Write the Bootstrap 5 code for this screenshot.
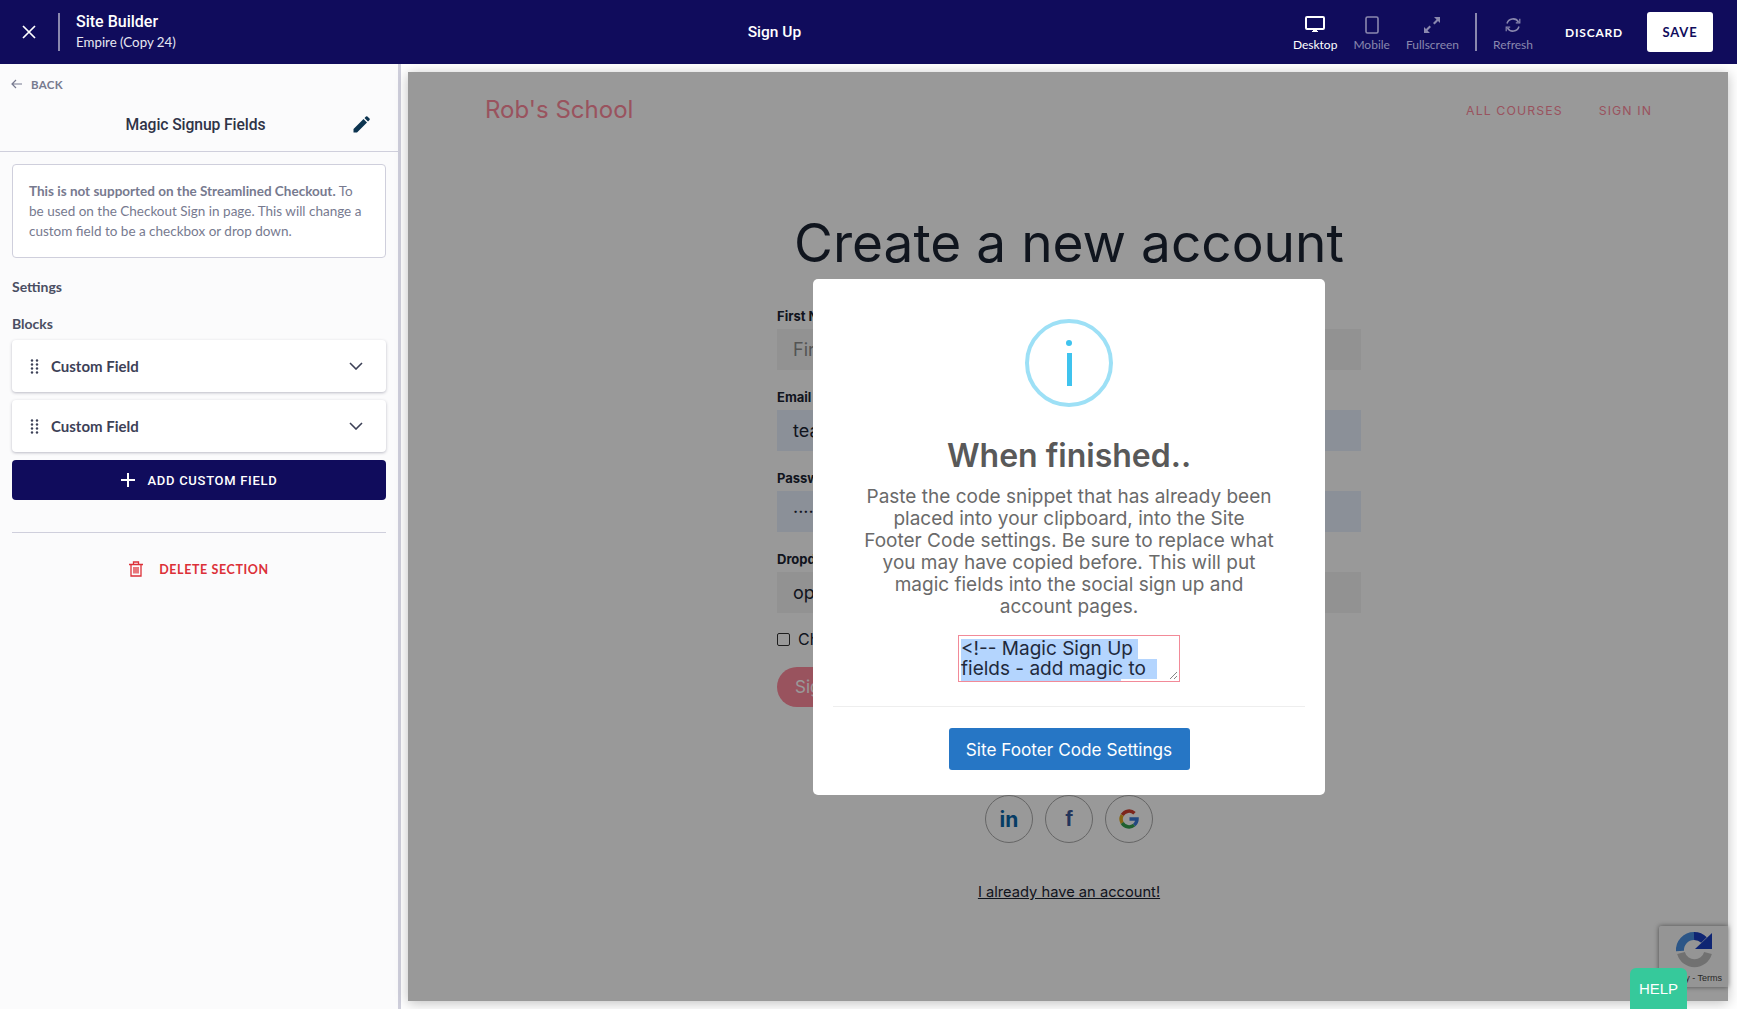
<!DOCTYPE html>
<html lang="en">
<head>
<meta charset="utf-8">
<title>Site Builder</title>
<link href="https://cdn.jsdelivr.net/npm/bootstrap@5.3.0/dist/css/bootstrap.min.css" rel="stylesheet">
<style>
html,body{height:100%;overflow:hidden}
body{font-family:"Lato","Noto Sans",sans-serif;background:#fff}
.shell{height:1009px}
.topbar{height:64px;background:#100c5c;color:#fff;flex:none}
.close-x{width:58px}
.vrule{width:2px;height:38px;background:#8a88ae}
.crumb-title{font:500 16px/20px Roboto,sans-serif}
.crumb-sub{font:400 13.3px/20px "Lato",sans-serif;color:#e7e7f2}
.page-name{font:500 15.5px Roboto,sans-serif;flex:1;text-align:center;padding-left:80px}
.tool{font:400 12px/14px "Lato",sans-serif;color:#8a88ae;text-align:center;padding-top:3px}
.tool.on{color:#fff}
.tool svg{display:block;margin:0 auto 4px}
.act-discard{font:700 12px "Lato",sans-serif;letter-spacing:.8px;color:#fff}
.act-save{font:700 13px "Lato",sans-serif;letter-spacing:.8px;color:#100c5c;background:#fff;border-radius:3px;width:66px;height:40px}
.sidepane{width:401px;flex:none;background:#fbfbfc;border-right:3px solid #cfcfdc;height:945px}
.back-row{height:40px;padding:0 11px;font:700 11.5px "Lato",sans-serif;letter-spacing:.3px;color:#777a8f}
.title-row{height:48px;border-bottom:1px solid #cfcfdc;padding:0 28px 7px 0}
.title-row h1{font:500 15.7px Roboto,sans-serif;letter-spacing:-.1px;color:#2f3347;margin:0;flex:1;text-align:center;padding-left:46px}
.info-box{margin:12px 12px 0;padding:16px 21px 16px 16px;height:94px;border:1px solid #cfcfdc;border-radius:4px;background:#fff;font:400 13.5px/20px "Lato",sans-serif;color:#777a8f}
.info-box b{font-weight:700}
.side-label{font:700 14px/18px "Lato",sans-serif;color:#4a4e62;margin:0 12px}
.label-first{margin-top:20px}
.label-next{margin-top:19px;margin-bottom:7px}
.field-card{height:52px;margin:0 12px 8px;background:#fff;border-radius:4px;box-shadow:0 1px 3px rgba(40,40,70,.3);padding:0 23px 0 18px;font:700 15px "Lato",sans-serif;color:#3d4157}
.add-btn{display:flex;gap:13px;height:40px;margin:0 12px;width:374px;background:#100c5c;color:#fff;border:0;border-radius:4px;font:500 13px Roboto,sans-serif;letter-spacing:.7px}
.side-rule{margin:32px 12px 0;border-top:1px solid #cfcfdc}
.del-row{margin-top:28px;font:700 12.5px "Lato",sans-serif;letter-spacing:.6px;color:#dc3038}
.stage{flex:1;padding:8px 9px 8px 7px;background:#fff;min-width:0}
.canvas{height:929px;background:#fff;box-shadow:0 2px 12px rgba(0,0,0,.25);font-family:Inter,sans-serif;color:#1b2433}
.site-nav{padding:17px 76px 0 77px;height:58px}
.site-links{padding-bottom:2px}
.brand-txt{font:400 24px Inter,sans-serif;color:#ff8a9d}
.nav-lnk{font:400 12.300px Inter,sans-serif;letter-spacing:1.1px;color:#ff8a9d;margin-left:36px}
.sign-form{width:584px;margin:0 0 0 369px}
.sign-form h2{font:400 53.200px/62px Inter,sans-serif;text-align:center;margin:82px -60px 34px;color:#1b2433;white-space:nowrap}
.sign-lbl{font:700 13px/16px Inter,sans-serif;margin:0 0 5px;display:block}
.sign-inp{height:41px;background:#f4f4f4;padding:0 16px;font:400 18px/41px Inter,sans-serif;color:#1b2433;margin-bottom:19px}
.sign-inp.auto{background:#e8f0fe}
.sign-inp.ph{color:#8d8d8d}
.chk{width:13px;height:13px;border:1px solid #333;border-radius:2px;background:#fff}
.chk-row{height:16px;font-size:16px;margin:-1px 0 20px}
.sign-btn{width:120px;height:40px;border-radius:20px;background:#ff8a9d;color:#fff;font-size:17px;padding-left:18px;line-height:40px}
.socials{margin-top:88px}
.soc{width:48px;height:48px;border-radius:50%;border:1px solid #aaa}
.soc-in{font:700 21px Inter,sans-serif;color:#0a66a8}
.soc-f{font:700 22px "Liberation Sans",sans-serif;color:#3b5998}
.have-acct{margin-top:38px;font-size:14.7px;text-align:center;color:#1b2433;text-decoration:underline}
.dimmer{inset:0;background:rgba(0,0,0,.4)}
.captcha{right:0;bottom:14px;width:69px;height:61px;background:#f9f9f9;box-shadow:0 0 5px rgba(0,0,0,.5);border-radius:2px 0 0 2px;overflow:hidden}
.captcha-icon{left:16px;top:5px}
.captcha-txt{font:400 9px "Liberation Sans",sans-serif;color:#444;right:6px;bottom:4px;white-space:nowrap}
.help-tab{right:50px;bottom:0;width:57px;height:41px;background:#36c99b;color:#fff;border-radius:6px 6px 0 0;font:400 15px/41px "Liberation Sans",sans-serif;text-align:center}
.dialog{left:405px;top:207px;width:512px;height:516px;background:#fff;border-radius:5px;padding:40px 20px 0;text-align:center;font-family:Inter,sans-serif}
.info-ring{width:88px;height:88px;border-radius:50%;border:4px solid #9de0f6;margin:0 auto 30px}
.info-dot{width:6px;height:6px;border-radius:50%;background:#3fc3ee;margin-top:17px}
.info-bar{width:5px;height:33px;background:#3fc3ee;margin-top:7px}
.dialog h3{font:600 32px/38px Inter,sans-serif;color:#595959;margin:0 0 11px}
.dialog p{font:400 19px/22px Inter,sans-serif;color:#6a6a6a;margin:0 -10px 17px}
.snippet{width:222px;height:47px;border:1px solid #f28a98;margin:0 auto;text-align:left;padding:3px 2px 2px;font:400 19px/20px Inter,sans-serif;color:#1f2a3c;overflow:hidden;white-space:pre}
.snippet span{background:#b4d5fe;display:inline-block;height:20px;vertical-align:top}
.grip{right:1px;bottom:1px}
.dlg-rule{margin:24px 0 21px;border-top:1px solid #eee}
.dlg-btn{width:241px;height:42px;background:#2676c5;color:#fff;border:0;border-radius:3px;font:400 17.200px Inter,sans-serif}
</style>
</head>
<body>
<div class="shell d-flex flex-column position-relative">
  <header class="topbar d-flex align-items-center">
    <div class="close-x d-flex justify-content-center">
      <svg width="16" height="16" viewBox="0 0 16 16" fill="none" stroke="#fff" stroke-width="1.7"><path d="M2 2l12 12M14 2L2 14"/></svg>
    </div>
    <div class="vrule"></div>
    <div class="ms-3">
      <div class="crumb-title">Site Builder</div>
      <div class="crumb-sub">Empire (Copy 24)</div>
    </div>
    <div class="page-name">Sign Up</div>
    <div class="d-flex align-items-center">
      <div class="tool on me-3">
        <svg width="20" height="18" viewBox="0 0 20 18" fill="none"><rect x="1" y="1" width="18" height="12" rx="1" stroke="#fff" stroke-width="2"/><path d="M7 15h6v1H7zM8 13h4v2H8z" fill="#fff"/></svg>
        Desktop
      </div>
      <div class="tool me-3">
        <svg width="14" height="18" viewBox="0 0 14 18" fill="none"><rect x="1" y="1" width="12" height="16" rx="1.5" stroke="#8a88ae" stroke-width="1.6"/></svg>
        Mobile
      </div>
      <div class="tool me-3">
        <svg width="18" height="18" viewBox="0 0 18 18" fill="#8a88ae"><path d="M11 1h6v6l-2-2-3.500 3.500-1.500-1.500L13.500 3.500zM7 17H1v-6l2 2 3.500-3.500 1.500 1.500L4.500 14.500z"/></svg>
        Fullscreen
      </div>
      <div class="vrule me-3"></div>
      <div class="tool">
        <svg width="18" height="18" viewBox="0 0 18 18" fill="none" stroke="#8a88ae" stroke-width="1.5"><path d="M3 7.500A6.300 6.300 0 0 1 14.500 6M15 10.500A6.300 6.300 0 0 1 3.500 12"/><path d="M15.800 2.800v4h-4M2.200 15.200v-4h4" stroke-width="1.200"/></svg>
        Refresh
      </div>
      <div class="act-discard ms-4 me-4 ps-2">DISCARD</div>
      <div class="act-save d-flex align-items-center justify-content-center me-4">SAVE</div>
    </div>
  </header>
  <div class="d-flex flex-grow-1">
    <aside class="sidepane">
      <div class="back-row d-flex align-items-center gap-2">
        <svg width="12" height="10" viewBox="0 0 12 10" fill="none" stroke="#777a8f" stroke-width="1.200"><path d="M11 5H1.500M5 1L1 5l4 4"/></svg>
        <span>BACK</span>
      </div>
      <div class="title-row d-flex align-items-center">
        <h1>Magic Signup Fields</h1>
        <svg class="ms-2" width="17" height="17" viewBox="0 0 17 17" fill="#0c3450"><path d="M0.500 16.500V13L10.500 3l3.500 3.500L4 16.500zM11.500 2L13 .5a1 1 0 0 1 1.400 0l2.100 2.100a1 1 0 0 1 0 1.400L15 5.500z"/></svg>
      </div>
      <div class="info-box"><b>This is not supported on the Streamlined Checkout.</b> To be used on the Checkout Sign in page. This will change a custom field to be a checkbox or drop down.</div>
      <div class="side-label label-first">Settings</div>
      <div class="side-label label-next">Blocks</div>
      <div class="field-card d-flex align-items-center">
        <svg width="9" height="15" viewBox="0 0 9 15" fill="#3d4157"><circle cx="2" cy="1.500" r="1.200"/><circle cx="7" cy="1.500" r="1.200"/><circle cx="2" cy="5.500" r="1.200"/><circle cx="7" cy="5.500" r="1.200"/><circle cx="2" cy="9.500" r="1.200"/><circle cx="7" cy="9.500" r="1.200"/><circle cx="2" cy="13.500" r="1.200"/><circle cx="7" cy="13.500" r="1.200"/></svg>
        <span class="ms-2 ps-1">Custom Field</span>
        <svg class="ms-auto" width="14" height="8" viewBox="0 0 14 8" fill="none" stroke="#3d4157" stroke-width="1.600"><path d="M1 1l6 6 6-6"/></svg>
      </div>
      <div class="field-card d-flex align-items-center">
        <svg width="9" height="15" viewBox="0 0 9 15" fill="#3d4157"><circle cx="2" cy="1.500" r="1.200"/><circle cx="7" cy="1.500" r="1.200"/><circle cx="2" cy="5.500" r="1.200"/><circle cx="7" cy="5.500" r="1.200"/><circle cx="2" cy="9.500" r="1.200"/><circle cx="7" cy="9.500" r="1.200"/><circle cx="2" cy="13.500" r="1.200"/><circle cx="7" cy="13.500" r="1.200"/></svg>
        <span class="ms-2 ps-1">Custom Field</span>
        <svg class="ms-auto" width="14" height="8" viewBox="0 0 14 8" fill="none" stroke="#3d4157" stroke-width="1.600"><path d="M1 1l6 6 6-6"/></svg>
      </div>
      <button class="add-btn align-items-center justify-content-center" type="button">
        <svg width="14" height="14" viewBox="0 0 14 14" stroke="#fff" stroke-width="2"><path d="M7 0v14M0 7h14"/></svg>
        ADD CUSTOM FIELD
      </button>
      <div class="side-rule"></div>
      <div class="del-row d-flex align-items-center justify-content-center gap-3">
        <svg width="14" height="16" viewBox="0 0 14 16" fill="none" stroke="#dc3038" stroke-width="1.300"><path d="M0 3.500h14M4.500 3.500V1h5v2.500M2 3.500V15h10V3.500M5 6v6.500M7 6v6.500M9 6v6.500"/></svg>
        DELETE SECTION
      </div>
    </aside>
    <main class="stage">
      <div class="canvas position-relative">
        <div class="site-nav d-flex align-items-center justify-content-between">
          <div class="brand-txt">Rob's School</div>
          <div class="site-links"><span class="nav-lnk">ALL COURSES</span><span class="nav-lnk">SIGN IN</span></div>
        </div>
        <div class="sign-form">
          <h2>Create a new account</h2>
          <label class="sign-lbl">First Name</label>
          <div class="sign-inp ph">First Name</div>
          <label class="sign-lbl">Email</label>
          <div class="sign-inp auto">teacher@example.com</div>
          <label class="sign-lbl">Password</label>
          <div class="sign-inp auto">········</div>
          <label class="sign-lbl">Dropdown</label>
          <div class="sign-inp">option</div>
          <div class="chk-row d-flex align-items-center gap-2"><div class="chk"></div><span>Checkbox</span></div>
          <div class="sign-btn">Sign Up</div>
          <div class="socials d-flex justify-content-center gap-2">
            <div class="soc soc-in d-flex align-items-center justify-content-center">in</div>
            <div class="soc soc-f d-flex align-items-center justify-content-center mx-1">f</div>
            <div class="soc d-flex align-items-center justify-content-center">
              <svg width="20" height="20" viewBox="0 0 20 20" fill="none" stroke-width="3.500"><path d="M3.200 6A8 8 0 0 1 15.500 4.200" stroke="#d0402f"/><path d="M3.200 6a8 8 0 0 0 0 8" stroke="#e0a820"/><path d="M3.200 14a8 8 0 0 0 12 2" stroke="#35a04f"/><path d="M15.200 16A8 8 0 0 0 18 10h-7.500" stroke="#3a78d8"/></svg>
            </div>
          </div>
          <div class="have-acct">I already have an account!</div>
        </div>
        <div class="captcha position-absolute">
          <svg class="captcha-icon position-absolute" width="38" height="38" viewBox="0 0 38 38" fill="none" stroke-width="8"><path d="M5 20A14 14 0 0 1 19 5" stroke="#4a90e2"/><path d="M19 5a14 14 0 0 1 10 4" stroke="#1a3fc0"/><path d="M37 2v16H20z" fill="#1a3fc0"/><path d="M33 22a14 14 0 0 1-27 0" stroke="#bdbdbd"/></svg>
          <div class="captcha-txt position-absolute">Privacy - Terms</div>
        </div>
        <div class="dimmer position-absolute"></div>
        <div class="dialog position-absolute">
          <div class="info-ring d-flex flex-column align-items-center">
            <div class="info-dot"></div>
            <div class="info-bar"></div>
          </div>
          <h3>When finished..</h3>
          <p>Paste the code snippet that has already been<br>placed into your clipboard, into the Site<br>Footer Code settings. Be sure to replace what<br>you may have copied before. This will put<br>magic fields into the social sign up and<br>account pages.</p>
          <div class="snippet position-relative"><span>&lt;!-- Magic Sign Up </span>
<span>fields - add magic to  </span>
<span>                              </span><svg class="grip position-absolute" width="9" height="9" viewBox="0 0 9 9" stroke="#666" stroke-width=".8"><path d="M1 8l7-7M5 8l3-3"/></svg></div>
          <div class="dlg-rule"></div>
          <button class="dlg-btn" type="button">Site Footer Code Settings</button>
        </div>
      </div>
    </main>
  </div>
  <div class="help-tab position-absolute">HELP</div>
</div>
<script src="https://cdn.jsdelivr.net/npm/bootstrap@5.3.0/dist/js/bootstrap.bundle.min.js"></script>
</body>
</html>
